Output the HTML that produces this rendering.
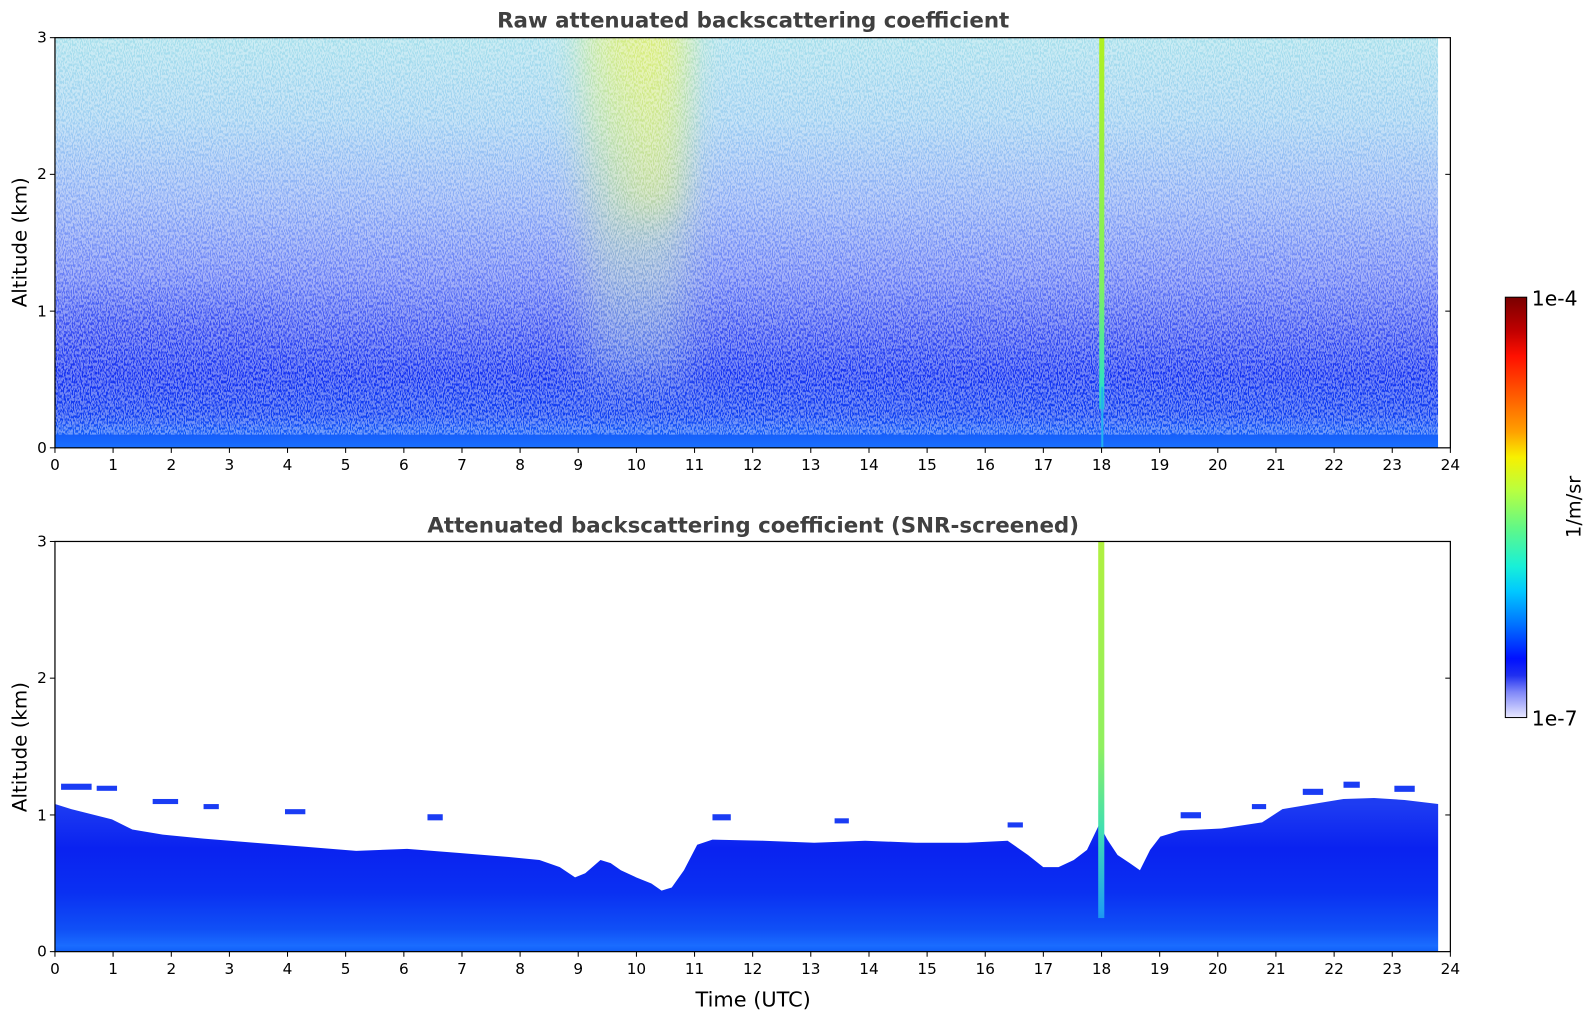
<!DOCTYPE html>
<html><head><meta charset="utf-8"><style>
html,body{margin:0;padding:0;background:#fff;width:1595px;height:1020px;overflow:hidden}
svg{display:block}
text{font-family:"DejaVu Sans","Liberation Sans",sans-serif}
</style></head><body>
<svg width="1595" height="1020" viewBox="0 0 1595 1020" xmlns="http://www.w3.org/2000/svg">
<defs>
<linearGradient id="topv" x1="0" y1="37" x2="0" y2="440" gradientUnits="userSpaceOnUse">
<stop offset="0" stop-color="#a8e0ec"/>
<stop offset="0.2" stop-color="#a0d0f2"/>
<stop offset="0.4" stop-color="#8cacf6"/>
<stop offset="0.58" stop-color="#6a80f6"/>
<stop offset="0.72" stop-color="#3c52f2"/>
<stop offset="0.82" stop-color="#1634f2"/>
<stop offset="0.92" stop-color="#1040f2"/>
<stop offset="0.97" stop-color="#1660fa"/>
<stop offset="1" stop-color="#1a70ff"/>
</linearGradient>
<linearGradient id="band" x1="0" y1="37" x2="0" y2="440" gradientUnits="userSpaceOnUse">
<stop offset="0" stop-color="#e0f070" stop-opacity="0.8"/>
<stop offset="0.4" stop-color="#c8ec90" stop-opacity="0.5"/>
<stop offset="0.8" stop-color="#b0e0e0" stop-opacity="0.3"/>
<stop offset="1" stop-color="#b0e0e0" stop-opacity="0"/>
</linearGradient>
<linearGradient id="line18" x1="0" y1="37" x2="0" y2="440" gradientUnits="userSpaceOnUse">
<stop offset="0" stop-color="#b0f020"/>
<stop offset="0.6" stop-color="#80f060"/>
<stop offset="0.85" stop-color="#30e0c0"/>
<stop offset="1" stop-color="#2090f0"/>
</linearGradient>
<linearGradient id="line18b" x1="0" y1="532" x2="0" y2="935" gradientUnits="userSpaceOnUse">
<stop offset="0" stop-color="#b0f040"/>
<stop offset="0.5" stop-color="#90f060"/>
<stop offset="0.7" stop-color="#40e0b0"/>
<stop offset="0.9" stop-color="#20a0f0"/>
<stop offset="1" stop-color="#1060f0"/>
</linearGradient>
<linearGradient id="botv" x1="0" y1="790" x2="0" y2="935" gradientUnits="userSpaceOnUse">
<stop offset="0" stop-color="#1e3cf2"/>
<stop offset="0.3" stop-color="#0a22f0"/>
<stop offset="0.6" stop-color="#0a30f2"/>
<stop offset="0.85" stop-color="#1050f6"/>
<stop offset="0.96" stop-color="#1a6cff"/>
<stop offset="1" stop-color="#1060f8"/>
</linearGradient>
<linearGradient id="cbar" x1="0" y1="292" x2="0" y2="705" gradientUnits="userSpaceOnUse">
<stop offset="0" stop-color="#7a0000"/>
<stop offset="0.08" stop-color="#c00000"/>
<stop offset="0.14" stop-color="#ff1000"/>
<stop offset="0.24" stop-color="#ff6000"/>
<stop offset="0.32" stop-color="#ffa000"/>
<stop offset="0.38" stop-color="#f8f000"/>
<stop offset="0.46" stop-color="#b8ff40"/>
<stop offset="0.55" stop-color="#60f888"/>
<stop offset="0.64" stop-color="#18f0d8"/>
<stop offset="0.70" stop-color="#00c8ff"/>
<stop offset="0.78" stop-color="#0070ff"/>
<stop offset="0.86" stop-color="#0010ff"/>
<stop offset="0.9" stop-color="#2030f0"/>
<stop offset="0.94" stop-color="#8088f8"/>
<stop offset="1" stop-color="#e8e8ff"/>
</linearGradient>
<filter id="speck" x="0" y="0" width="1" height="1">
<feTurbulence type="fractalNoise" baseFrequency="0.9 0.35" numOctaves="1" seed="3" result="n"/>
<feColorMatrix in="n" type="matrix" values="0 0 0 0 1  0 0 0 0 1  0 0 0 0 1  0 0 0 -9 5.2" result="w"/>
<feComposite in="w" in2="SourceGraphic" operator="in"/>
</filter>
<filter id="blur" x="-50%" y="-50%" width="200%" height="200%"><feGaussianBlur stdDeviation="18"/></filter>
<clipPath id="topclip"><rect x="54" y="37" width="1359" height="403"/></clipPath>
</defs>
<g transform="scale(1.0178)">
<!-- TOP PLOT -->
<g clip-path="url(#topclip)">
<rect x="54" y="37" width="1359" height="403" fill="url(#topv)"/>
<rect x="54" y="300" width="220" height="100" fill="#1a30f0" opacity="0.25" filter="url(#blur)"/>
<rect x="575" y="10" width="100" height="370" fill="url(#band)" filter="url(#blur)"/>
<rect x="620" y="10" width="45" height="200" fill="#e8f060" opacity="0.4" filter="url(#blur)"/>
<rect x="54" y="37" width="1359" height="390" fill="#fff" opacity="0.4" filter="url(#speck)"/>
<rect x="1080" y="37" width="5" height="365" fill="url(#line18)"/>
<rect x="1082" y="380" width="2" height="60" fill="#20b0f0"/>
</g>
<rect x="54" y="37" width="1371" height="403" fill="none" stroke="#000" stroke-width="1.2"/>
<g stroke="#000" stroke-width="1">
<line x1="54" y1="440" x2="54" y2="445"/><line x1="111.1" y1="440" x2="111.1" y2="445"/><line x1="168.3" y1="440" x2="168.3" y2="445"/><line x1="225.4" y1="440" x2="225.4" y2="445"/><line x1="282.5" y1="440" x2="282.5" y2="445"/><line x1="339.6" y1="440" x2="339.6" y2="445"/><line x1="396.8" y1="440" x2="396.8" y2="445"/><line x1="453.9" y1="440" x2="453.9" y2="445"/><line x1="511" y1="440" x2="511" y2="445"/><line x1="568.1" y1="440" x2="568.1" y2="445"/><line x1="625.3" y1="440" x2="625.3" y2="445"/><line x1="682.4" y1="440" x2="682.4" y2="445"/><line x1="739.5" y1="440" x2="739.5" y2="445"/><line x1="796.6" y1="440" x2="796.6" y2="445"/><line x1="853.8" y1="440" x2="853.8" y2="445"/><line x1="910.9" y1="440" x2="910.9" y2="445"/><line x1="968" y1="440" x2="968" y2="445"/><line x1="1025.1" y1="440" x2="1025.1" y2="445"/><line x1="1082.3" y1="440" x2="1082.3" y2="445"/><line x1="1139.4" y1="440" x2="1139.4" y2="445"/><line x1="1196.5" y1="440" x2="1196.5" y2="445"/><line x1="1253.6" y1="440" x2="1253.6" y2="445"/><line x1="1310.8" y1="440" x2="1310.8" y2="445"/><line x1="1367.9" y1="440" x2="1367.9" y2="445"/><line x1="1425" y1="440" x2="1425" y2="445"/>
<line x1="49" y1="440" x2="54" y2="440"/><line x1="49" y1="305.7" x2="54" y2="305.7"/><line x1="49" y1="171.3" x2="54" y2="171.3"/><line x1="49" y1="37" x2="54" y2="37"/>
<line x1="1420" y1="305.7" x2="1425" y2="305.7"/><line x1="1420" y1="171.3" x2="1425" y2="171.3"/>
</g>
<g font-size="15" text-anchor="middle" fill="#000">
<text x="54" y="462">0</text><text x="111.1" y="462">1</text><text x="168.3" y="462">2</text><text x="225.4" y="462">3</text><text x="282.5" y="462">4</text><text x="339.6" y="462">5</text><text x="396.8" y="462">6</text><text x="453.9" y="462">7</text><text x="511" y="462">8</text><text x="568.1" y="462">9</text><text x="625.3" y="462">10</text><text x="682.4" y="462">11</text><text x="739.5" y="462">12</text><text x="796.6" y="462">13</text><text x="853.8" y="462">14</text><text x="910.9" y="462">15</text><text x="968" y="462">16</text><text x="1025.1" y="462">17</text><text x="1082.3" y="462">18</text><text x="1139.4" y="462">19</text><text x="1196.5" y="462">20</text><text x="1253.6" y="462">21</text><text x="1310.8" y="462">22</text><text x="1367.9" y="462">23</text><text x="1425" y="462">24</text>
</g>
<g font-size="15" text-anchor="end">
<text x="46" y="445">0</text><text x="46" y="311">1</text><text x="46" y="176">2</text><text x="46" y="42">3</text>
</g>
<text x="740" y="27" font-size="21" font-weight="bold" fill="#404040" text-anchor="middle">Raw attenuated backscattering coefficient</text>
<text transform="translate(26,238) rotate(-90)" font-size="19.5" text-anchor="middle">Altitude (km)</text>

<!-- BOTTOM PLOT -->
<path d="M54,935 L54,790 L70,795 L90,800 L110,805 L130,815 L160,820 L200,824 L250,828 L300,832 L350,836 L400,834 L450,838 L500,842 L530,845 L550,852 L565,862 L575,858 L590,845 L600,848 L610,855 L625,862 L640,868 L650,875 L660,872 L672,855 L685,830 L700,825 L750,826 L800,828 L850,826 L900,828 L950,828 L990,826 L1010,840 L1025,852 L1040,852 L1055,845 L1068,835 L1080,810 L1088,825 L1098,840 L1110,848 L1120,855 L1130,835 L1140,822 L1160,816 L1200,814 L1240,808 L1260,795 L1290,790 L1320,785 L1350,784 L1380,786 L1413,790 L1413,935 Z" fill="url(#botv)"/>
<g fill="#1a3cf4">
<rect x="60" y="770" width="30" height="6"/><rect x="95" y="772" width="20" height="5"/><rect x="150" y="785" width="25" height="5"/><rect x="200" y="790" width="15" height="5"/><rect x="280" y="795" width="20" height="5"/><rect x="420" y="800" width="15" height="6"/><rect x="700" y="800" width="18" height="6"/><rect x="820" y="804" width="14" height="5"/><rect x="990" y="808" width="15" height="5"/><rect x="1160" y="798" width="20" height="6"/><rect x="1230" y="790" width="14" height="5"/><rect x="1280" y="775" width="20" height="6"/><rect x="1320" y="768" width="16" height="6"/><rect x="1370" y="772" width="20" height="6"/>
</g>
<rect x="1079" y="532" width="6" height="370" fill="url(#line18b)"/>
<rect x="54" y="532" width="1371" height="403" fill="none" stroke="#000" stroke-width="1.2"/>
<g stroke="#000" stroke-width="1">
<line x1="54" y1="935" x2="54" y2="940"/><line x1="111.1" y1="935" x2="111.1" y2="940"/><line x1="168.3" y1="935" x2="168.3" y2="940"/><line x1="225.4" y1="935" x2="225.4" y2="940"/><line x1="282.5" y1="935" x2="282.5" y2="940"/><line x1="339.6" y1="935" x2="339.6" y2="940"/><line x1="396.8" y1="935" x2="396.8" y2="940"/><line x1="453.9" y1="935" x2="453.9" y2="940"/><line x1="511" y1="935" x2="511" y2="940"/><line x1="568.1" y1="935" x2="568.1" y2="940"/><line x1="625.3" y1="935" x2="625.3" y2="940"/><line x1="682.4" y1="935" x2="682.4" y2="940"/><line x1="739.5" y1="935" x2="739.5" y2="940"/><line x1="796.6" y1="935" x2="796.6" y2="940"/><line x1="853.8" y1="935" x2="853.8" y2="940"/><line x1="910.9" y1="935" x2="910.9" y2="940"/><line x1="968" y1="935" x2="968" y2="940"/><line x1="1025.1" y1="935" x2="1025.1" y2="940"/><line x1="1082.3" y1="935" x2="1082.3" y2="940"/><line x1="1139.4" y1="935" x2="1139.4" y2="940"/><line x1="1196.5" y1="935" x2="1196.5" y2="940"/><line x1="1253.6" y1="935" x2="1253.6" y2="940"/><line x1="1310.8" y1="935" x2="1310.8" y2="940"/><line x1="1367.9" y1="935" x2="1367.9" y2="940"/><line x1="1425" y1="935" x2="1425" y2="940"/>
<line x1="49" y1="935" x2="54" y2="935"/><line x1="49" y1="800.7" x2="54" y2="800.7"/><line x1="49" y1="666.3" x2="54" y2="666.3"/><line x1="49" y1="532" x2="54" y2="532"/>
<line x1="1420" y1="800.7" x2="1425" y2="800.7"/><line x1="1420" y1="666.3" x2="1425" y2="666.3"/>
</g>
<g font-size="15" text-anchor="middle" fill="#000">
<text x="54" y="957">0</text><text x="111.1" y="957">1</text><text x="168.3" y="957">2</text><text x="225.4" y="957">3</text><text x="282.5" y="957">4</text><text x="339.6" y="957">5</text><text x="396.8" y="957">6</text><text x="453.9" y="957">7</text><text x="511" y="957">8</text><text x="568.1" y="957">9</text><text x="625.3" y="957">10</text><text x="682.4" y="957">11</text><text x="739.5" y="957">12</text><text x="796.6" y="957">13</text><text x="853.8" y="957">14</text><text x="910.9" y="957">15</text><text x="968" y="957">16</text><text x="1025.1" y="957">17</text><text x="1082.3" y="957">18</text><text x="1139.4" y="957">19</text><text x="1196.5" y="957">20</text><text x="1253.6" y="957">21</text><text x="1310.8" y="957">22</text><text x="1367.9" y="957">23</text><text x="1425" y="957">24</text>
</g>
<g font-size="15" text-anchor="end">
<text x="46" y="940">0</text><text x="46" y="806">1</text><text x="46" y="671">2</text><text x="46" y="537">3</text>
</g>
<text x="740" y="523" font-size="21" font-weight="bold" fill="#404040" text-anchor="middle">Attenuated backscattering coefficient (SNR-screened)</text>
<text transform="translate(26,734) rotate(-90)" font-size="19.5" text-anchor="middle">Altitude (km)</text>
<text x="740" y="989" font-size="20.5" text-anchor="middle">Time (UTC)</text>

<!-- COLORBAR -->
<rect x="1479" y="292" width="21" height="413" fill="url(#cbar)" stroke="#000" stroke-width="1"/>
<text x="1505" y="300" font-size="20">1e-4</text>
<text x="1505" y="713" font-size="20">1e-7</text>
<text transform="translate(1553,498) rotate(-90)" font-size="19" text-anchor="middle">1/m/sr</text>
</g>
</svg>
</body></html>
